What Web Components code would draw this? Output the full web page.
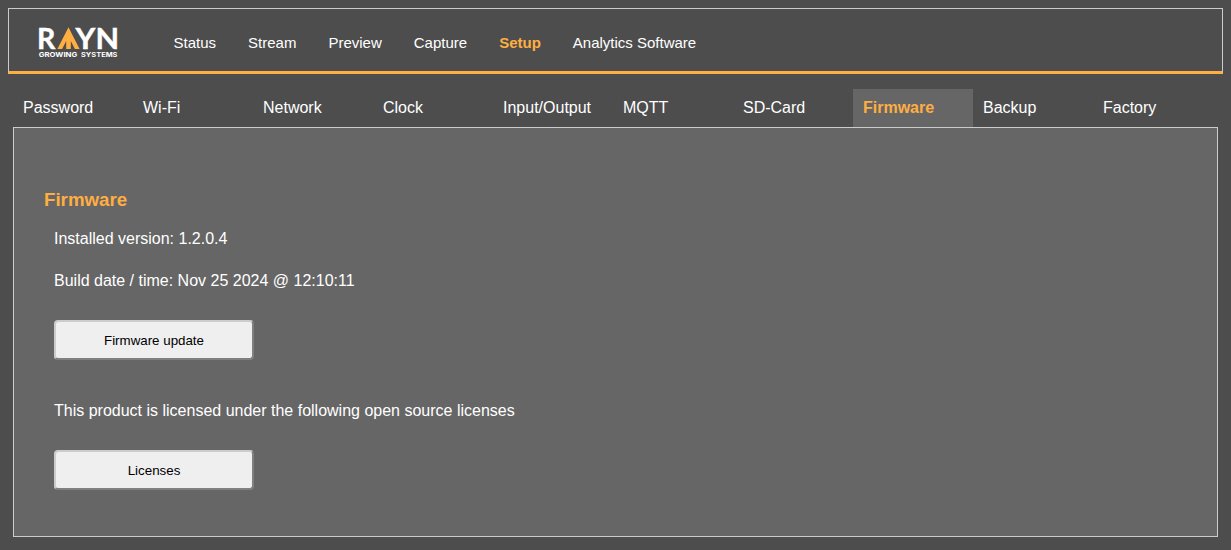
<!DOCTYPE html>
<html lang="en"><head><meta charset="utf-8"><title>RAYN Growing Systems</title>
<style>
html{background:#4d4d4d}
body{margin:0;font-family:"Liberation Sans",Arial,sans-serif;color:#fff;font-size:16px}
</style></head><body>
<rayn-app></rayn-app>
<script>
const define=(name,html)=>customElements.define(name,class extends HTMLElement{
  constructor(){super();this.attachShadow({mode:'open'}).innerHTML=html;}
});
define('rayn-logo',`<style>:host{display:block;width:80px;height:34px;flex:none;margin-top:4px}svg{display:block;overflow:visible}text{font-family:Lato,sans-serif;fill:#fff}.big{font-size:28.6px;font-weight:700;stroke:#fff;stroke-width:.4px}.small{font-family:Inter,sans-serif;font-size:6.8px;font-weight:700}</style>
<svg width="80" height="34" viewBox="38 25 80 34">
<text class="big" x="37" y="48.6">R</text>
<text class="big" x="75.6" y="48.6" textLength="43.4" lengthAdjust="spacingAndGlyphs">YN</text>
<path fill="#ffae42" d="M68.5 27.2 79.6 49H74.9L70.8 41V49H66.2V41L62.1 49H57.4Z"/>
<text class="small" x="38.7" y="56.7" textLength="38.6" lengthAdjust="spacingAndGlyphs">GROWING</text>
<text class="small" x="81" y="56.7" textLength="36.5" lengthAdjust="spacingAndGlyphs">SYSTEMS</text>
</svg>`);
define('nav-item',`<style>:host{display:block;font-size:15px;line-height:17px;white-space:nowrap}:host([active]){color:#ffae42;font-weight:bold}</style><slot></slot>`);
define('top-bar',`<style>:host{display:flex;box-sizing:border-box;height:66px;border:1px solid #ccc;border-bottom:3px solid #ffae42;padding-left:29px;align-items:center}
nav{display:flex;gap:32px;margin-left:55.5px;padding-top:4px}</style><rayn-logo></rayn-logo><nav><slot></slot></nav>`);
define('tab-item',`<style>:host{display:block;box-sizing:border-box;width:120px;height:38px;padding:0 10px;line-height:37px;white-space:nowrap}:host([active]){background:#666;color:#ffae42;font-weight:bold}</style><slot></slot>`);
define('tab-bar',`<style>:host{display:flex;margin:15px 5px 0}</style><slot></slot>`);
define('action-button',`<style>:host{display:block;width:200px;height:40px}button{display:block;box-sizing:border-box;width:100%;height:100%;margin:0;padding:0;border:2px solid;border-color:#ccc #808080 #808080 #ccc;border-radius:4px;background:#efefef;color:#000;font:13.3333px "Liberation Sans",Arial,sans-serif}</style><button><slot></slot></button>`);
define('settings-panel',`<style>:host{display:block;box-sizing:border-box;height:410px;margin:0 5px;border:1px solid #ccc;background:#666;padding:61px 30px 0}
h3{margin:0;font-size:18.72px;line-height:21px;color:#ffae42}.body{padding-left:10px}</style><h3><slot name="title"></slot></h3><div class="body"><slot></slot></div>`);
define('text-row',`<style>:host{display:block;line-height:18px;margin-top:24px}:host([first]){margin-top:20px}:host([gap]){margin-top:42px}</style><slot></slot>`);
define('rayn-app',`<style>:host{display:block;padding:8px}action-button{margin-top:30px}</style>
<top-bar><nav-item>Status</nav-item><nav-item>Stream</nav-item><nav-item>Preview</nav-item><nav-item>Capture</nav-item><nav-item active>Setup</nav-item><nav-item>Analytics Software</nav-item></top-bar>
<tab-bar><tab-item>Password</tab-item><tab-item>Wi-Fi</tab-item><tab-item>Network</tab-item><tab-item>Clock</tab-item><tab-item>Input/Output</tab-item><tab-item>MQTT</tab-item><tab-item>SD-Card</tab-item><tab-item active>Firmware</tab-item><tab-item>Backup</tab-item><tab-item>Factory</tab-item></tab-bar>
<settings-panel><span slot="title">Firmware</span>
<text-row first>Installed version: 1.2.0.4</text-row>
<text-row>Build date / time: Nov 25 2024 @ 12:10:11</text-row>
<action-button>Firmware update</action-button>
<text-row gap>This product is licensed under the following open source licenses</text-row>
<action-button>Licenses</action-button>
</settings-panel>`);
</script></body></html>
